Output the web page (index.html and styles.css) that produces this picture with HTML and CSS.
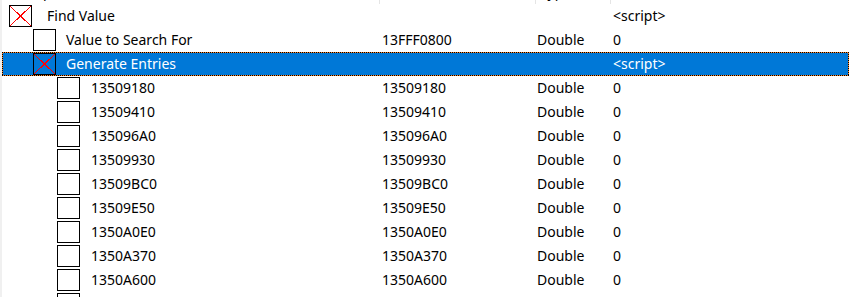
FILE: index.html
```html
<!DOCTYPE html>
<html>
<head>
<meta charset="utf-8">
<link rel="stylesheet" href="styles.css">
</head>
<body>
<div class="list">
  <div class="header">
    <div class="hcell c-desc">Description</div>
    <div class="hcell c-addr">Address</div>
    <div class="hcell c-type">Type</div>
    <div class="hcell c-val">Value</div>
  </div>
  <div class="row lvl0">
    <div class="cell c-desc"><span class="cb x"><svg viewBox="0 0 21 20" shape-rendering="crispEdges"><path d="M0 0L21 20M21 0L0 20"/></svg></span><span class="txt">Find Value</span></div>
    <div class="cell c-addr"></div><div class="cell c-type"></div><div class="cell c-val">&lt;script&gt;</div>
  </div>
  <div class="row lvl1">
    <div class="cell c-desc"><span class="cb"></span><span class="txt">Value to Search For</span></div>
    <div class="cell c-addr">13FFF0800</div><div class="cell c-type">Double</div><div class="cell c-val">0</div>
  </div>
  <div class="row lvl1 sel">
    <div class="cell c-desc"><span class="cb x"><svg viewBox="0 0 21 20" shape-rendering="crispEdges"><path d="M0 0L21 20M21 0L0 20"/></svg></span><span class="txt">Generate Entries</span></div>
    <div class="cell c-addr"></div><div class="cell c-type"></div><div class="cell c-val">&lt;script&gt;</div>
  </div>
  <div class="row lvl2"><div class="cell c-desc"><span class="cb"></span><span class="txt">13509180</span></div><div class="cell c-addr">13509180</div><div class="cell c-type">Double</div><div class="cell c-val">0</div></div>
  <div class="row lvl2"><div class="cell c-desc"><span class="cb"></span><span class="txt">13509410</span></div><div class="cell c-addr">13509410</div><div class="cell c-type">Double</div><div class="cell c-val">0</div></div>
  <div class="row lvl2"><div class="cell c-desc"><span class="cb"></span><span class="txt">135096A0</span></div><div class="cell c-addr">135096A0</div><div class="cell c-type">Double</div><div class="cell c-val">0</div></div>
  <div class="row lvl2"><div class="cell c-desc"><span class="cb"></span><span class="txt">13509930</span></div><div class="cell c-addr">13509930</div><div class="cell c-type">Double</div><div class="cell c-val">0</div></div>
  <div class="row lvl2"><div class="cell c-desc"><span class="cb"></span><span class="txt">13509BC0</span></div><div class="cell c-addr">13509BC0</div><div class="cell c-type">Double</div><div class="cell c-val">0</div></div>
  <div class="row lvl2"><div class="cell c-desc"><span class="cb"></span><span class="txt">13509E50</span></div><div class="cell c-addr">13509E50</div><div class="cell c-type">Double</div><div class="cell c-val">0</div></div>
  <div class="row lvl2"><div class="cell c-desc"><span class="cb"></span><span class="txt">1350A0E0</span></div><div class="cell c-addr">1350A0E0</div><div class="cell c-type">Double</div><div class="cell c-val">0</div></div>
  <div class="row lvl2"><div class="cell c-desc"><span class="cb"></span><span class="txt">1350A370</span></div><div class="cell c-addr">1350A370</div><div class="cell c-type">Double</div><div class="cell c-val">0</div></div>
  <div class="row lvl2"><div class="cell c-desc"><span class="cb"></span><span class="txt">1350A600</span></div><div class="cell c-addr">1350A600</div><div class="cell c-type">Double</div><div class="cell c-val">0</div></div>
  <div class="row lvl2"><div class="cell c-desc"><span class="cb"></span><span class="txt">1350A890</span></div><div class="cell c-addr">1350A890</div><div class="cell c-type">Double</div><div class="cell c-val">0</div></div>
</div>
</body>
</html>
```
FILE: styles.css
```css
html, body {
  margin: 0;
  padding: 0;
  background: #f0f0f0;
  overflow: hidden;
  width: 849px;
  height: 297px;
}
.list {
  margin-left: 2px;
  background: #ffffff;
  height: 297px;
  overflow: hidden;
  font-family: "Noto Sans", "Open Sans", sans-serif;
  font-size: 14px;
  color: #000;
}
.header {
  display: grid;
  grid-template-columns: 378px 156px 75px 1fr;
  height: 24px;
  margin-top: -20px;
  background: #fff;
}
.hcell {
  border-right: 1px solid #e5e5e5;
  line-height: 23px;
  padding-left: 4px;
  color: #000;
  white-space: nowrap;
}
.hcell.c-val { border-right: none; }
.row {
  position: relative;
  display: grid;
  grid-template-columns: 378px 156px 75px 1fr;
  height: 24px;
  line-height: 24px;
  white-space: nowrap;
}
.cell {
  padding-left: 2px;
  overflow: hidden;
}
.cell.c-type { padding-left: 1px; }
.cell.c-val { padding-left: 2px; }
.c-desc {
  display: flex;
  align-items: flex-start;
  padding-left: 0;
}
.cb {
  box-sizing: border-box;
  width: 23px;
  height: 22px;
  margin-top: 1px;
  border: 1px solid #000;
  background: #fff;
  flex: none;
}
.cb svg {
  display: block;
  width: 21px;
  height: 20px;
}
.cb svg path {
  stroke: #ff0000;
  stroke-width: 1;
  fill: none;
}
.lvl0 .cb { margin-left: 7px; }
.lvl0 .txt { margin-left: 15px; }
.lvl1 .cb { margin-left: 31px; }
.lvl1 .txt { margin-left: 10px; }
.lvl2 .cb { margin-left: 55px; }
.lvl2 .txt { margin-left: 11px; }
.sel {
  background: #0078d7;
  color: #fff;
}
.sel .cb { background: #0078d7; }
.sel::after {
  content: "";
  position: absolute;
  inset: 0;
  pointer-events: none;
  background:
    repeating-linear-gradient(90deg, #000 0 1px, #ff8728 1px 2px) top left / 100% 1px no-repeat,
    repeating-linear-gradient(90deg, #000 0 1px, #ff8728 1px 2px) bottom left / 100% 1px no-repeat,
    repeating-linear-gradient(180deg, #000 0 1px, #ff8728 1px 2px) top left / 1px 100% no-repeat,
    repeating-linear-gradient(180deg, #000 0 1px, #ff8728 1px 2px) top right / 1px 100% no-repeat;
}
```
